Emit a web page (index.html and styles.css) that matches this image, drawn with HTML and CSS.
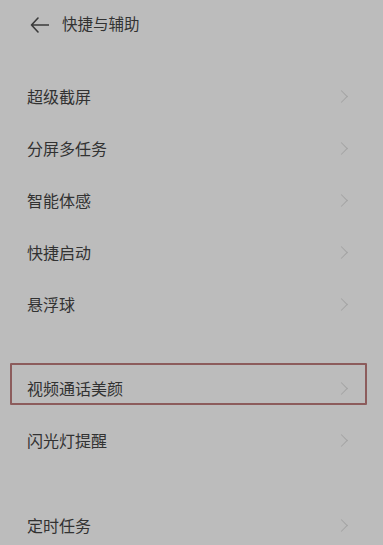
FILE: index.html
```html
<!DOCTYPE html>
<html lang="zh">
<head>
<meta charset="utf-8">
<link rel="stylesheet" href="styles.css">
</head>
<body>
<div class="page">
  <header class="header">
    <svg class="back" width="19" height="16" viewBox="0 0 19 16"><path d="M8 1 L1.5 8 L8 15 M1.5 8 H18.5" fill="none" stroke="#3a3a3a" stroke-width="1.6" stroke-linecap="round" stroke-linejoin="round"/></svg>
    <span class="title">快捷与辅助</span>
  </header>
  <div class="group g1">
    <div class="row"><span>超级截屏</span><i class="chev"></i></div>
    <div class="row"><span>分屏多任务</span><i class="chev"></i></div>
    <div class="row"><span>智能体感</span><i class="chev"></i></div>
    <div class="row"><span>快捷启动</span><i class="chev"></i></div>
    <div class="row"><span>悬浮球</span><i class="chev"></i></div>
  </div>
  <div class="group g2">
    <div class="row marked"><span>视频通话美颜</span><i class="chev"></i></div>
    <div class="row"><span>闪光灯提醒</span><i class="chev"></i></div>
  </div>
  <div class="group g3">
    <div class="row"><span>定时任务</span><i class="chev"></i></div>
  </div>
</div>
</body>
</html>
```

FILE: styles.css
```css
html, body {
  margin: 0;
  padding: 0;
  background: #bcbcbc;
  overflow: hidden;
}
.page {
  width: 383px;
  height: 545px;
  font-family: "Noto Sans CJK SC", "Noto Sans", sans-serif;
  color: #323232;
}
.header {
  height: 48px;
  display: flex;
  align-items: center;
  padding-left: 30px;
  box-sizing: border-box;
}
.back {
  margin-top: 2px;
  display: block;
}
.title {
  margin-left: 13px;
  font-size: 15.5px;
  line-height: 1;
}
.g1 { margin-top: 22px; }
.g2 { margin-top: 32px; }
.g3 { margin-top: 33px; }
.row {
  position: relative;
  height: 52px;
  display: flex;
  align-items: center;
  justify-content: space-between;
  padding: 0 37px 0 27px;
  font-size: 16px;
}
.row span { line-height: 1; }
.chev {
  width: 8px;
  height: 8px;
  border-top: 1.4px solid #a3a3a3;
  border-right: 1.4px solid #a3a3a3;
  transform: rotate(45deg);
  display: block;
}
.marked::after {
  content: "";
  position: absolute;
  left: 10px;
  top: 1px;
  width: 357px;
  height: 42px;
  box-sizing: border-box;
  border: 2px solid #8c5c5c;
  border-radius: 1px;
}
```
